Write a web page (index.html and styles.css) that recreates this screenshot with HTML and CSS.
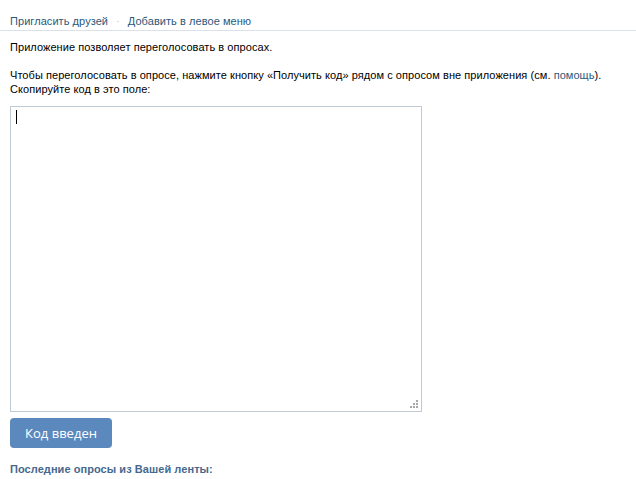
FILE: index.html
```html
<!DOCTYPE html>
<html lang="ru">
<head>
  <meta charset="UTF-8" />
  <title>Переголосование</title>
  <link rel="stylesheet" href="styles.css">
</head>
<body>
  <div class="app-links">
    <a href="#">Пригласить друзей</a>
    <span class="divider">·</span>
    <a href="#">Добавить в левое меню</a>
  </div>

  <div class="content">
    <p>Приложение позволяет переголосовать в опросах.</p>
    <p>Чтобы переголосовать в опросе, нажмите кнопку «Получить код» рядом с опросом вне приложения (см. <a href="#">помощь</a>).<br>Скопируйте код в это поле:</p>

    <div class="field-wrap">
      <textarea class="code-field"></textarea>
      <span class="caret"></span>
      <!-- resize grip -->
      <svg class="grip" width="9" height="9" viewBox="0 0 9 9">
        <g fill="#a8a8a8">
          <rect x="6" y="0" width="2" height="2"/>
          <rect x="3" y="3" width="2" height="2"/>
          <rect x="6" y="3" width="2" height="2"/>
          <rect x="0" y="6" width="2" height="2"/>
          <rect x="3" y="6" width="2" height="2"/>
          <rect x="6" y="6" width="2" height="2"/>
        </g>
      </svg>
    </div>

    <button class="button">Код введен</button>

    <h3 class="feed-title">Последние опросы из Вашей ленты:</h3>
  </div>
</body>
</html>
```

FILE: styles.css
```css
* {
  margin: 0;
  padding: 0;
  box-sizing: border-box;
}

body {
  font-family: Tahoma, 'Liberation Sans', Arial, sans-serif;
  font-size: 11px;
  letter-spacing: 0.06px;
  color: #000;
  background: #fff;
}

a {
  color: #2b587a;
  text-decoration: none;
}

.app-links {
  display: flex;
  align-items: center;
  gap: 8px;
  height: 31px;
  padding: 12px 10px 0;
  border-bottom: 1px solid #dae1e8;
}

.app-links .divider {
  color: #b9c4cf;
}

.content {
  padding: 9px 10px 0;
}

.content p {
  line-height: 14px;
  margin-bottom: 14px;
}

.field-wrap {
  position: relative;
  width: 412px;
  margin-top: -4px;
}

.code-field {
  display: block;
  width: 412px;
  height: 306px;
  border: 1px solid #c0cad5;
  font-family: inherit;
  font-size: 11px;
  padding: 4px 5px;
  resize: none;
  outline: none;
}

.caret {
  position: absolute;
  left: 6px;
  top: 4px;
  width: 1px;
  height: 14px;
  background: #000;
}

.grip {
  position: absolute;
  right: 3px;
  bottom: 3px;
}

.button {
  display: block;
  margin-top: 6px;
  width: 102px;
  height: 30px;
  background: #5b88bd;
  border: none;
  border-radius: 4px;
  color: #fff;
  font-family: 'Open Sans', 'Liberation Sans', sans-serif;
  font-size: 13px;
}

.feed-title {
  margin-top: 15px;
  font-size: 11px;
  color: #45688e;
}
```
